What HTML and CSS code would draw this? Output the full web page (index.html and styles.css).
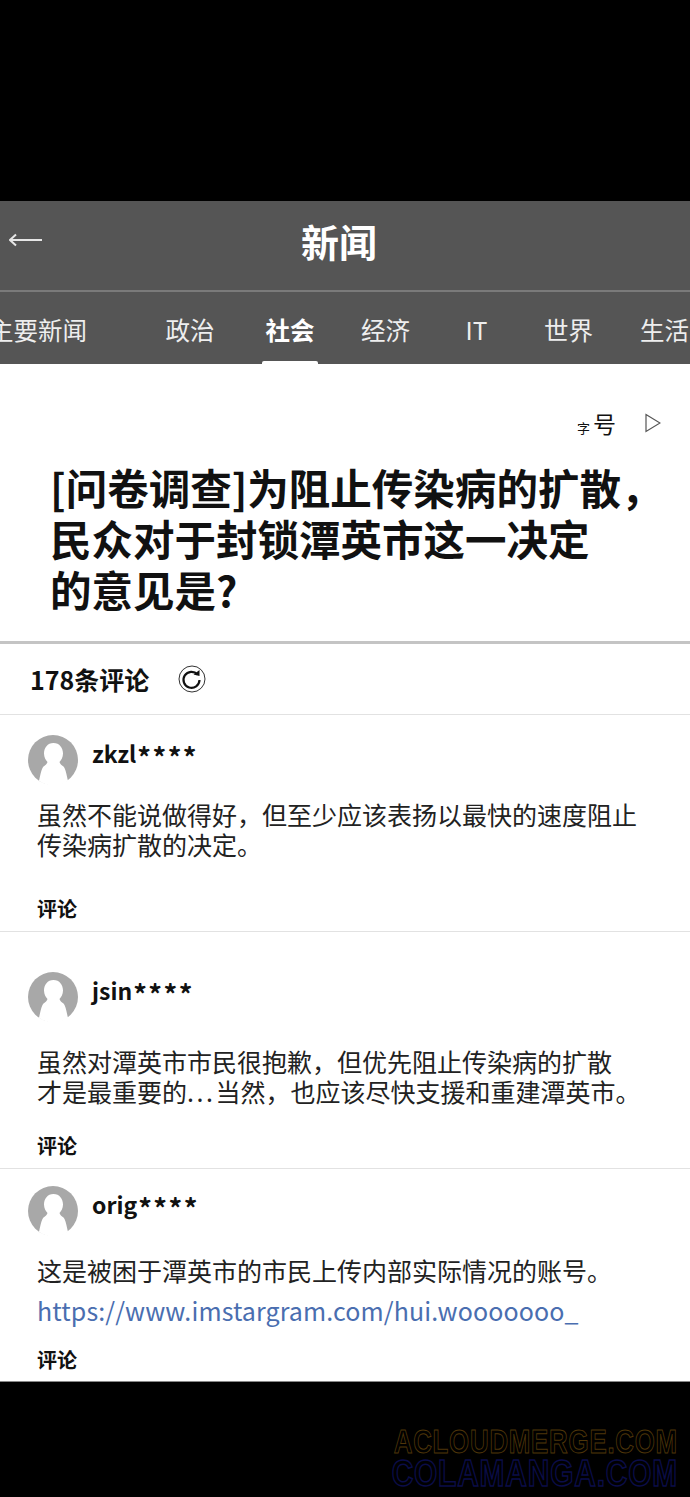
FILE: index.html
```html
<!DOCTYPE html>
<html lang="zh">
<head>
  <meta charset="UTF-8">
  <meta name="viewport" content="width=device-width, initial-scale=1.0">
  <title>新闻</title>
  <link rel="stylesheet" href="styles.css">
</head>
<body>
  <div class="top-gap"></div>

  <header class="app-header">
    <svg class="back" width="34" height="14" viewBox="0 0 34 14">
      <path d="M1 7H33M7 1.5 1 7l6 5.5" fill="none" stroke="#e6e6e6" stroke-width="2"/>
    </svg>
    <h1>新闻</h1>
  </header>

  <nav class="tabs">
    <span class="tab tab-first">主要新闻</span>
    <span class="tab">政治</span>
    <span class="tab active">社会</span>
    <span class="tab">经济</span>
    <span class="tab">IT</span>
    <span class="tab">世界</span>
    <span class="tab">生活</span>
  </nav>

  <main class="article">
    <div class="tools">
      <span class="font-size"><small>字</small>号</span>
      <svg width="16" height="20" viewBox="0 0 16 20">
        <path d="M1 1.5 15 10 1 18.5Z" fill="none" stroke="#555" stroke-width="1.2"/>
      </svg>
    </div>

    <h2 class="headline">[问卷调查]为阻止传染病的扩散，<br>民众对于封锁潭英市这一决定<br>的意见是?</h2>

    <div class="count-row">
      <strong>178条评论</strong>
      <svg width="28" height="28" viewBox="0 0 28 28">
        <circle cx="14" cy="14" r="13" fill="none" stroke="#333" stroke-width="1"/>
        <path d="M19.5 9.5A8 8 0 1 0 21.5 15" fill="none" stroke="#111" stroke-width="2.2"/>
        <path d="M15.5 9.5 21.5 11V5Z" fill="#111"/>
      </svg>
    </div>

    <section class="comment comment-one">
      <div class="user">
        <svg class="avatar" width="50" height="50" viewBox="0 0 50 50">
          <circle cx="25" cy="25" r="25" fill="#a8a8a8"/>
          <path d="M25.5 8c6 0 9.5 5 9.5 10.5 0 4-2 7-3.5 8.5.5 2 2 3 4 4.5 2 2 3 8 4.5 14.5a25 25 0 0 1-29 0c1.5-6.5 2.5-12.5 4.5-14.5 2-1.5 3.5-2.5 4-4.5-1.5-1.5-3.5-4.5-3.5-8.5 0-5.5 3.5-10.5 9.5-10.5Z" fill="#fff"/>
        </svg>
        <span class="name">zkzl<span class="stars">****</span></span>
      </div>
      <p class="body">虽然不能说做得好，但至少应该表扬以最快的速度阻止<br>传染病扩散的决定。</p>
      <div class="reply">评论</div>
    </section>

    <section class="comment comment-two">
      <div class="user">
        <svg class="avatar" width="50" height="50" viewBox="0 0 50 50">
          <circle cx="25" cy="25" r="25" fill="#a8a8a8"/>
          <path d="M25.5 8c6 0 9.5 5 9.5 10.5 0 4-2 7-3.5 8.5.5 2 2 3 4 4.5 2 2 3 8 4.5 14.5a25 25 0 0 1-29 0c1.5-6.5 2.5-12.5 4.5-14.5 2-1.5 3.5-2.5 4-4.5-1.5-1.5-3.5-4.5-3.5-8.5 0-5.5 3.5-10.5 9.5-10.5Z" fill="#fff"/>
        </svg>
        <span class="name">jsin<span class="stars">****</span></span>
      </div>
      <p class="body">虽然对潭英市市民很抱歉，但优先阻止传染病的扩散<br>才是最重要的<span class="dots">...</span>当然，也应该尽快支援和重建潭英市。</p>
      <div class="reply">评论</div>
    </section>

    <section class="comment comment-three">
      <div class="user">
        <svg class="avatar" width="50" height="50" viewBox="0 0 50 50">
          <circle cx="25" cy="25" r="25" fill="#a8a8a8"/>
          <path d="M25.5 8c6 0 9.5 5 9.5 10.5 0 4-2 7-3.5 8.5.5 2 2 3 4 4.5 2 2 3 8 4.5 14.5a25 25 0 0 1-29 0c1.5-6.5 2.5-12.5 4.5-14.5 2-1.5 3.5-2.5 4-4.5-1.5-1.5-3.5-4.5-3.5-8.5 0-5.5 3.5-10.5 9.5-10.5Z" fill="#fff"/>
        </svg>
        <span class="name">orig<span class="stars">****</span></span>
      </div>
      <p class="body">这是被困于潭英市的市民上传内部实际情况的账号。<br><a href="#">https://www.imstargram.com/hui.wooooooo_</a></p>
      <div class="reply">评论</div>
    </section>
  </main>

  <footer class="bottom-gap">
    <div class="mark mark-orange">ACLOUDMERGE.COM</div>
    <div class="mark mark-blue">COLAMANGA.COM</div>
  </footer>
</body>
</html>
```

FILE: styles.css
```css
html, body {
  margin: 0;
  padding: 0;
}
body {
  width: 690px;
  height: 1497px;
  overflow: hidden;
  background-color: #000;
  font-family: "Noto Sans CJK SC", "Noto Sans", sans-serif;
  color: #111;
}
.top-gap {
  height: 201px;
}
.app-header {
  position: relative;
  display: flex;
  justify-content: center;
  align-items: center;
  height: 79px;
  padding-bottom: 10px;
  background-color: #555;
  border-bottom: 2px solid #7a7a7a;
}
.app-header h1 {
  margin: 0 12px 0 0;
  font-size: 38px;
  font-weight: 700;
  line-height: 1;
  color: #fff;
}
.back {
  position: absolute;
  top: 32px;
  left: 9px;
}
.tabs {
  display: grid;
  grid-template-columns: 152px 96px 104px 87px 95px 89px 103px;
  align-items: center;
  height: 72px;
  margin-left: -10px;
  width: 726px;
  background-color: #555;
  font-size: 24.5px;
  color: #eee;
}
.tab {
  position: relative;
  display: flex;
  justify-content: center;
  align-items: center;
  height: 100%;
  padding-top: 3px;
  box-sizing: border-box;
}
.tab-first {
  justify-content: flex-start;
  margin-left: -1px;
}
.tab.active {
  font-weight: 700;
  color: #fff;
}
.tab.active::after {
  content: "";
  position: absolute;
  bottom: 0;
  left: 24px;
  width: 56px;
  height: 3px;
  background-color: #fff;
  border-radius: 2px 2px 0 0;
}
.article {
  height: 1018px;
  background-color: #fff;
  border-bottom: 1px solid #888;
  box-sizing: border-box;
}
.tools {
  display: flex;
  justify-content: flex-end;
  align-items: center;
  gap: 29px;
  height: 42px;
  padding: 38px 29px 0 0;
}
.font-size {
  font-size: 23px;
  line-height: 1;
}
.font-size small {
  margin-right: 3px;
  font-size: 13px;
}
.headline {
  margin: 0;
  padding: 18px 0 0 50px;
  height: 179px;
  font-size: 41.5px;
  font-weight: 700;
  line-height: 51px;
  color: #111;
  border-bottom: 3px solid #c4c4c4;
}
.count-row {
  display: flex;
  align-items: center;
  gap: 29px;
  height: 70px;
  padding-left: 30px;
  font-size: 25px;
  border-bottom: 1px solid #e2e2e2;
}
.comment {
  box-sizing: border-box;
  padding: 20px 0 0 28px;
  border-bottom: 1px solid #e2e2e2;
}
.comment-one {
  height: 217px;
}
.comment-two {
  height: 237px;
  padding-top: 40px;
}
.comment-three {
  height: 212px;
  padding-top: 17px;
  border-bottom: none;
}
.user {
  display: flex;
  align-items: flex-start;
  gap: 14px;
  height: 50px;
}
.avatar {
  flex: none;
}
.name {
  font-size: 23px;
  font-weight: 700;
  line-height: 36px;
}
.stars {
  margin-left: 1px;
  font-size: 27px;
  letter-spacing: 1.5px;
  vertical-align: -5px;
  line-height: 1;
}
.body {
  margin: 14px 0 0 9px;
  height: 95px;
  font-size: 25px;
  line-height: 30px;
  color: #222;
}
.comment-two .body {
  margin-top: 24px;
  height: 85px;
}
.comment-three .body {
  margin-top: 14px;
  line-height: 40px;
  height: 95px;
}
.dots {
  letter-spacing: 2.5px;
}
.body a {
  color: #4a6eb0;
  letter-spacing: .1px;
  text-decoration: none;
}
.reply {
  margin-left: 9px;
  font-size: 20px;
  font-weight: 700;
  line-height: 30px;
}
.bottom-gap {
  position: relative;
  height: 115px;
}
.mark {
  position: absolute;
  right: 12px;
  font-family: "Liberation Sans", sans-serif;
  font-weight: 700;
  line-height: .8;
  letter-spacing: 1px;
  color: transparent;
  transform-origin: right center;
}
.mark-orange {
  top: 46px;
  font-size: 34px;
  transform: scaleX(.76);
  -webkit-text-stroke: 1px #4f3609;
}
.mark-blue {
  top: 78px;
  font-size: 36px;
  transform: scaleX(.83);
  -webkit-text-stroke: 1.5px #0b0d48;
}
```
